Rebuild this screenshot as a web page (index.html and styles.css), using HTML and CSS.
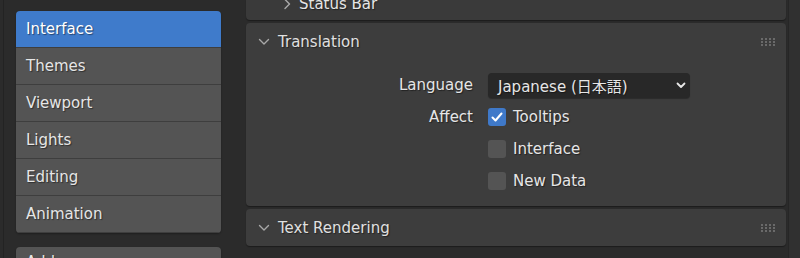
FILE: index.html
```html
<!DOCTYPE html>
<html lang="en">
<head>
    <meta charset="UTF-8">
    <meta name="viewport" content="width=device-width, initial-scale=1.0">
    <title>Preferences</title>
    <link rel="stylesheet" href="styles.css">
</head>
<body>

    <aside class="sidebar">
        <nav class="nav-group">
            <div class="nav-item active">Interface</div>
            <div class="nav-item">Themes</div>
            <div class="nav-item">Viewport</div>
            <div class="nav-item">Lights</div>
            <div class="nav-item">Editing</div>
            <div class="nav-item">Animation</div>
        </nav>
        <nav class="nav-group">
            <div class="nav-item nav-item-cut">Add-ons</div>
        </nav>
    </aside>

    <main class="content">
        <div class="panels">
            <!-- collapsed sub panel, scrolled partly out of view -->
            <section class="panel panel-cut">
                <div class="subheader">
                    <svg class="chevron-right" width="8" height="12" viewBox="0 0 8 12">
                        <path d="M2 1.5 L6.5 6 L2 10.5" fill="none" stroke="#a8a8a8" stroke-width="1.4" stroke-linecap="round" stroke-linejoin="round"/>
                    </svg>
                    <span>Status Bar</span>
                </div>
            </section>

            <section class="panel">
                <header class="panel-header">
                    <svg class="chevron-down" width="12" height="8" viewBox="0 0 12 8">
                        <path d="M1.5 1.5 L6 6 L10.5 1.5" fill="none" stroke="#a8a8a8" stroke-width="1.4" stroke-linecap="round" stroke-linejoin="round"/>
                    </svg>
                    <span class="panel-title">Translation</span>
                    <svg class="grip" width="15" height="8" viewBox="0 0 15 8">
                        <g fill="#6a6a6a">
                            <rect x="0" y="0" width="2" height="2"/><rect x="4" y="0" width="2" height="2"/><rect x="8" y="0" width="2" height="2"/><rect x="12" y="0" width="2" height="2"/>
                            <rect x="0" y="3" width="2" height="2"/><rect x="4" y="3" width="2" height="2"/><rect x="8" y="3" width="2" height="2"/><rect x="12" y="3" width="2" height="2"/>
                            <rect x="0" y="6" width="2" height="2"/><rect x="4" y="6" width="2" height="2"/><rect x="8" y="6" width="2" height="2"/><rect x="12" y="6" width="2" height="2"/>
                        </g>
                    </svg>
                </header>
                <div class="panel-body">
                    <div class="prop-row">
                        <span class="prop-label">Language</span>
                        <div class="dropdown">
                            <span>Japanese (日本語)</span>
                            <svg width="10" height="7" viewBox="0 0 10 7">
                                <path d="M1.5 1.5 L5 5 L8.5 1.5" fill="none" stroke="#e8e8e8" stroke-width="1.8" stroke-linecap="round" stroke-linejoin="round"/>
                            </svg>
                        </div>
                    </div>
                    <div class="prop-row">
                        <span class="prop-label">Affect</span>
                        <span class="checkbox checked">
                            <svg width="14" height="12" viewBox="0 0 14 12">
                                <path d="M2.5 6.5 L5.5 9.5 L11.5 2.5" fill="none" stroke="#fff" stroke-width="2" stroke-linecap="round" stroke-linejoin="round"/>
                            </svg>
                        </span>
                        <span class="check-text">Tooltips</span>
                    </div>
                    <div class="prop-row">
                        <span class="prop-label"></span>
                        <span class="checkbox"></span>
                        <span class="check-text">Interface</span>
                    </div>
                    <div class="prop-row">
                        <span class="prop-label"></span>
                        <span class="checkbox"></span>
                        <span class="check-text">New Data</span>
                    </div>
                </div>
            </section>

            <section class="panel">
                <header class="panel-header">
                    <svg class="chevron-down" width="12" height="8" viewBox="0 0 12 8">
                        <path d="M1.5 1.5 L6 6 L10.5 1.5" fill="none" stroke="#a8a8a8" stroke-width="1.4" stroke-linecap="round" stroke-linejoin="round"/>
                    </svg>
                    <span class="panel-title">Text Rendering</span>
                    <svg class="grip" width="15" height="8" viewBox="0 0 15 8">
                        <g fill="#6a6a6a">
                            <rect x="0" y="0" width="2" height="2"/><rect x="4" y="0" width="2" height="2"/><rect x="8" y="0" width="2" height="2"/><rect x="12" y="0" width="2" height="2"/>
                            <rect x="0" y="3" width="2" height="2"/><rect x="4" y="3" width="2" height="2"/><rect x="8" y="3" width="2" height="2"/><rect x="12" y="3" width="2" height="2"/>
                            <rect x="0" y="6" width="2" height="2"/><rect x="4" y="6" width="2" height="2"/><rect x="8" y="6" width="2" height="2"/><rect x="12" y="6" width="2" height="2"/>
                        </g>
                    </svg>
                </header>
            </section>
        </div>
        <div class="scroll-strip"></div>
    </main>

</body>
</html>
```

FILE: styles.css
```css
body {
    font-family: 'DejaVu Sans', 'Noto Sans CJK JP', sans-serif;
    font-size: 15px;
    background-color: #2b2b2b;
    color: #e6e6e6;
    margin: 0;
    padding: 0;
    height: 258px;
    overflow: hidden;
    display: flex;
}

.sidebar {
    width: 205px;
    padding: 11px 25px 0 12px;
    flex-shrink: 0;
    border-left: 1px solid #232323;
    margin-left: 3px;
}

.nav-group {
    border-radius: 4px;
    overflow: hidden;
    margin-bottom: 14px;
    box-shadow: 0 1px 2px rgba(0, 0, 0, 0.3);
}

.nav-item {
    height: 36px;
    line-height: 37px;
    padding-left: 10px;
    background-color: #545454;
    border-bottom: 1px solid #3e3e3e;
    text-shadow: 1px 1px 1px rgba(0, 0, 0, 0.45);
}

    .nav-item.active {
        background-color: #3f7bcb;
        color: #fff;
    }

    .nav-item.nav-item-cut {
        line-height: 31px;
    }

.content {
    flex: 1;
    display: flex;
}

.panels {
    flex: 1;
    display: flex;
    flex-direction: column;
    gap: 3px;
}

.panel {
    background-color: #3d3d3d;
    border-radius: 4px;
    box-shadow: 0 1px 1px rgba(0, 0, 0, 0.35);
}

.panel-cut {
    height: 20px;
    overflow: hidden;
    border-radius: 0 0 4px 4px;
    background-color: #3a3a3a;
}

.subheader {
    height: 30px;
    margin-top: -11px;
    padding-left: 37px;
    display: flex;
    align-items: center;
    gap: 8px;
    text-shadow: 1px 1px 1px rgba(0, 0, 0, 0.45);
}

.panel-header {
    height: 37px;
    display: flex;
    align-items: center;
    padding: 0 10px 0 12px;
    text-shadow: 1px 1px 1px rgba(0, 0, 0, 0.45);
}

.panel-title {
    margin-left: 8px;
    flex: 1;
    color: #e0e0e0;
}

.panel-body {
    padding: 9px 0 9px;
}

.prop-row {
    height: 32px;
    display: flex;
    align-items: center;
}

.prop-label {
    width: 227px;
    text-align: right;
    margin-right: 15px;
    text-shadow: 1px 1px 1px rgba(0, 0, 0, 0.45);
}

.dropdown {
    width: 202px;
    height: 25px;
    box-sizing: border-box;
    padding: 0 4px 0 10px;
    background-color: #282828;
    border-radius: 4px;
    display: flex;
    align-items: center;
    justify-content: space-between;
    box-shadow: 0 1px 1px rgba(0, 0, 0, 0.3);
    text-shadow: 1px 1px 1px rgba(0, 0, 0, 0.45);
}

.checkbox {
    width: 18px;
    height: 18px;
    border-radius: 3px;
    background-color: #545454;
    display: flex;
    align-items: center;
    justify-content: center;
    margin-right: 7px;
}

    .checkbox.checked {
        background-color: #3f79c9;
    }

.check-text {
    text-shadow: 1px 1px 1px rgba(0, 0, 0, 0.45);
}

.scroll-strip {
    width: 11px;
    margin-left: 2px;
    border-left: 1px solid #262626;
    background-color: #303030;
}
```
